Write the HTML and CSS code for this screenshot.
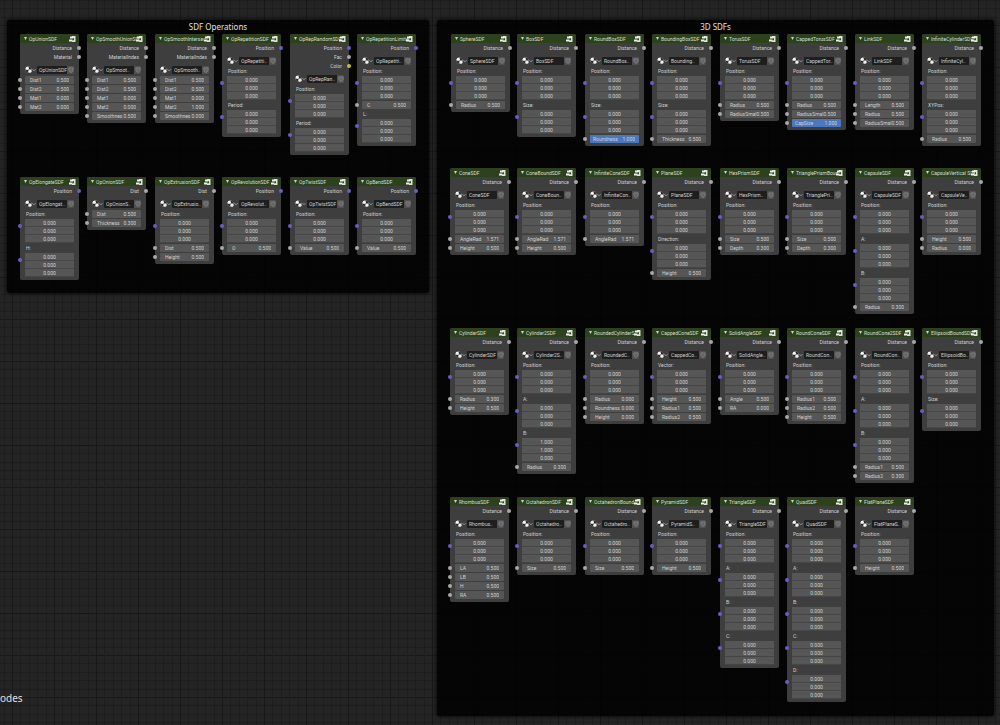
FILE: index.html
```html
<!DOCTYPE html>
<html lang="en">
<head>
    <meta charset="UTF-8">
    <meta name="viewport" content="width=device-width, initial-scale=1.0">
    <title>SDF Nodes</title>
    <link rel="stylesheet" href="styles.css">
</head>

<body>
    <!-- Icons shared by all nodes -->
    <svg class="sprites" aria-hidden="true">
        <symbol id="icon-group" viewBox="0 0 14 12">
            <path d="M6 0h7v12H6V9h3V4H6z" fill="#dfe3dc"/>
            <path d="M2 1h6v4H2zM0 7h7v4H0z" fill="#eef0ec"/>
            <path d="M8 5h2v3H8z" fill="#33491f"/>
        </symbol>
        <symbol id="icon-sphere" viewBox="0 0 14 14">
            <circle cx="7" cy="7" r="6" fill="#d8d8d8"/>
            <path d="M7 1a6 6 0 0 1 6 6H7zM7 7v6a6 6 0 0 1-6-6z" fill="#2c2c2c"/>
            <circle cx="4.500" cy="4.500" r="3" fill="#f4f4f4"/>
            <circle cx="10" cy="10.500" r="3" fill="#efefef"/>
        </symbol>
        <symbol id="icon-shield" viewBox="0 0 14 14">
            <path d="M2 2h10v5c0 3-2 4-5 6-3-2-5-3-5-6z" fill="#666" stroke="#8c8c8c" stroke-width="1.500"/>
        </symbol>
        <symbol id="icon-chevron" viewBox="0 0 8 8">
            <path d="M1 2.500l3 3 3-3" fill="none" stroke="#bbb" stroke-width="1.500"/>
        </symbol>
    </svg>

    <main class="canvas">
        <section class="frame operations" id="operations">
            <h2>SDF Operations</h2>
        </section>
        <section class="frame shapes" id="shapes">
            <h2>3D SDFs</h2>
        </section>
        <p class="caption">odes</p>
    </main>

    <script src="nodes.js"></script>
</body>
</html>
```
FILE: styles.css
```css
* {
    box-sizing: border-box;
}

body {
    margin: 0;
    background-color: #242424;
    color: #d0d0d0;
    font-family: Roboto, "Liberation Sans", sans-serif;
    font-size: 5px;
    line-height: 10px;
}

.sprites {
    display: none;
}

/* Node editor background, four thin lines between two strong ones */
.canvas {
    --thin: transparent 1px 8px, #1e1e1e 8px 9px, transparent 9px 17px, #1e1e1e 17px 18px, transparent 18px 25px, #1e1e1e 25px 26px, transparent 26px 34px, #1e1e1e 34px 35px, transparent 35px;
    position: relative;
    min-height: 100vh;
    overflow: hidden;
    background-image:
        linear-gradient(to right, #181818 1px, var(--thin)),
        linear-gradient(to bottom, #181818 1px, var(--thin));
    background-size: 42px 42px;
    background-position: 12px 25px;
}

.frame {
    position: absolute;
    top: 20px;
    border-radius: 2px;
    background-color: rgba(0, 0, 0, 0.85);
    box-shadow: 0 0 4px #000;
}

.operations {
    left: 7px;
    width: 422px;
    height: 273px;
}

.shapes {
    left: 437px;
    width: 557px;
    height: 696px;
}

.frame h2 {
    margin: 2px 0 0;
    color: #e0e0e0;
    font-family: "Noto Sans", sans-serif;
    font-size: 8px;
    font-weight: normal;
    line-height: 10px;
    text-align: center;
}

.caption {
    position: absolute;
    left: 0;
    bottom: 19px;
    margin: 0;
    color: #e0e0e0;
    font-family: "Noto Sans", sans-serif;
    font-size: 10px;
    line-height: 16px;
}

/* Nodes */
.node {
    position: absolute;
    width: 59px;
    padding-bottom: 3px;
    border-radius: 2px;
    background-color: #3e3e3e;
}

.node header {
    display: flex;
    align-items: center;
    height: 9px;
    padding: 0 3px 0 4px;
    border-radius: 2px 2px 0 0;
    background-color: #2c421c;
}

.node h3 {
    flex: 1;
    min-width: 0;
    margin: 0 0 0 2px;
    color: #d8dcd4;
    font-size: 5px;
    font-weight: normal;
    white-space: nowrap;
}

.arrow {
    flex: none;
    width: 3px;
    height: 3px;
    background-color: #d0d0d0;
    clip-path: polygon(0 0, 100% 0, 50% 100%);
}

.node header svg {
    flex: none;
    width: 7px;
    height: 6px;
}

.output,
.field,
.vector {
    position: relative;
}

.output {
    height: 9px;
    padding-right: 7px;
    text-align: right;
}

.socket {
    position: absolute;
    top: 50%;
    left: -2px;
    width: 4px;
    height: 4px;
    margin-top: -2px;
    border-radius: 50%;
    background-color: #a8a8a8;
}

.output .socket {
    right: -2px;
    left: auto;
}

.socket.blue {
    background-color: #6460c4;
}

.socket.yellow {
    background-color: #c2c62c;
}

.group {
    display: flex;
    align-items: center;
    height: 9px;
    margin: 4px 5px 1px;
}

.group button {
    display: flex;
    flex: none;
    align-items: center;
    padding: 0;
    border: 0;
    background: none;
}

.group .browse {
    width: 12px;
}

.group .browse svg {
    width: 7px;
    height: 7px;
}

.group .browse .small {
    width: 4px;
    height: 4px;
}

.group .fake {
    justify-content: center;
    width: 7px;
    height: 8px;
    border-radius: 0 1px 1px 0;
    background-color: #505050;
}

.group .fake svg {
    width: 6px;
    height: 6px;
}

input {
    min-width: 0;
    padding: 0;
    border: 0;
    background: none;
    color: #d0d0d0;
    font: inherit;
}

.group input {
    flex: 1;
    height: 8px;
    padding-left: 2px;
    border-radius: 1px 0 0 1px;
    background-color: #1e1e1e;
}

.vector {
    padding: 0 5px;
}

.vector span {
    display: block;
    height: 10px;
    padding-left: 1px;
}

.vector input {
    display: block;
    width: 100%;
    height: 8px;
    border-bottom: 1px solid #464646;
    background-color: #565656;
    text-align: center;
}

.field {
    height: 9px;
    padding: 1px 5px 0;
}

.field label {
    display: flex;
    height: 8px;
    padding: 0 5px;
    border-radius: 1px;
    background-color: #565656;
    line-height: 8px;
}

.field label span {
    flex: 1;
    min-width: 0;
    white-space: nowrap;
}

.field input {
    flex: none;
    width: 13px;
    height: 8px;
    text-align: right;
}

.field.slider label {
    padding: 0 4px 0 3px;
    background-color: #4a78c0;
}
```
FILE: nodes.js
```js
// Inputs: "Name:" is a vector, "Name 0.500" a value, a leading * marks a full slider
const operations = [
    { y: 34, nodes: [
        [20, 'OpUnionSDF', 'OpUnionSDF', 'Distance,Material', 'Dist1 0.500,Dist2 0.500,Mat1 0.000,Mat2 0.000'],
        [87, 'OpSmoothUnionSD', 'OpSmoot..', 'Distance,MaterialIndex', 'Dist1 0.500,Dist2 0.500,Mat1 0.000,Mat2 0.000,Smoothnes 0.500'],
        [155, 'OpSmoothIntersec', 'OpSmooth..', 'Distance,MaterialIndex', 'Dist1 0.500,Dist2 0.500,Mat1 0.000,Mat2 1.000,Smoothnes 0.000'],
        [222, 'OpRepetitionSDF', 'OpRepetiti..', 'Position', 'Position:,Period:'],
        [290, 'OpRepRandomSDF', 'OpRepRan..', 'Position,Fac,Color', 'Position:,Period:'],
        [357, 'OpRepetitionLimite', 'OpRepetiti..', 'Position', 'Position:,C 0.500,L:']
    ] },
    { y: 177, nodes: [
        [20, 'OpElongateSDF', 'OpElongat..', 'Position', 'Position:,H:'],
        [87, 'OpOnionSDF', 'OpOnionS..', 'Dist', 'Dist 0.500,Thickness 0.300'],
        [155, 'OpExtrusionSDF', 'OpExtrusio..', 'Dist', 'Position:,Dist 0.500,Height 0.500'],
        [222, 'OpRevolutionSDF', 'OpRevolut..', 'Position', 'Position:,O 0.500'],
        [290, 'OpTwistSDF', 'OpTwistSDF', 'Position', 'Position:,Value 0.500'],
        [357, 'OpBendSDF', 'OpBendSDF', 'Position', 'Position:,Value 0.500']
    ] }
];

const shapes = [
    { y: 34, nodes: [
        [451, 'SphereSDF', 'SphereSDF', 'Distance', 'Position:,Radius 0.500'],
        [517, 'BoxSDF', 'BoxSDF', 'Distance', 'Position:,Size:'],
        [585, 'RoundBoxSDF', 'RoundBox..', 'Distance', 'Position:,Size:,*Roundness 1.000'],
        [652, 'BoundingBoxSDF', 'Bounding..', 'Distance', 'Position:,Size:,Thickness 0.500'],
        [720, 'TorusSDF', 'TorusSDF', 'Distance', 'Position:,Radius 0.500,RadiusSmal 0.500'],
        [787, 'CappedTorusSDF', 'CappedTor..', 'Distance', 'Position:,Radius 0.500,RadiusSmal 0.500,*CapSize 1.000'],
        [855, 'LinkSDF', 'LinkSDF', 'Distance', 'Position:,Length 0.500,Radius 0.500,RadiusSmal 0.500'],
        [922, 'InfiniteCylinderSDF', 'InfiniteCyl..', 'Distance', 'Position:,XYPos:,Radius 0.500']
    ] },
    { y: 168, nodes: [
        [450, 'ConeSDF', 'ConeSDF', 'Distance', 'Position:,AngleRad 1.571,Height 0.500'],
        [517, 'ConeBoundSDF', 'ConeBoun..', 'Distance', 'Position:,AngleRad 1.571,Height 0.500'],
        [585, 'InfiniteConeSDF', 'InfiniteCon..', 'Distance', 'Position:,AngleRad 1.571'],
        [652, 'PlaneSDF', 'PlaneSDF', 'Distance', 'Position:,Direction:,Height 0.500'],
        [720, 'HexPrismSDF', 'HexPrism..', 'Distance', 'Position:,Size 0.500,Depth 0.300'],
        [787, 'TrianglePrismBoun', 'TrianglePri..', 'Distance', 'Position:,Size 0.500,Depth 0.300'],
        [855, 'CapsuleSDF', 'CapsuleSDF', 'Distance', 'Position:,A:,B:,Radius 0.300'],
        [922, 'CapsuleVertical SDF', 'CapsuleVe..', 'Distance', 'Position:,Height 0.500,Radius 0.000']
    ] },
    { y: 328, nodes: [
        [450, 'CylinderSDF', 'CylinderSDF', 'Distance', 'Position:,Radius 0.300,Height 0.500'],
        [517, 'Cylinder2SDF', 'Cylinder2S..', 'Distance', 'Position:,A:,B:1.000/1.000/0.000,Radius 0.300'],
        [585, 'RoundedCylinderS..', 'RoundedC..', 'Distance', 'Position:,Radius 0.000,Roundness 0.000,Height 0.000'],
        [652, 'CappedConeSDF', 'CappedCo..', 'Distance', 'Vector:,Height 0.500,Radius1 0.500,Radius2 0.500'],
        [720, 'SolidAngleSDF', 'SolidAngle..', 'Distance', 'Position:,Angle 0.500,RA 0.000'],
        [787, 'RoundConeSDF', 'RoundCon..', 'Distance', 'Position:,Radius1 0.500,Radius2 0.500,Height 0.500'],
        [855, 'RoundCone2SDF', 'RoundCon..', 'Distance', 'Position:,A:,B:,Radius1 0.500,Radius2 0.300'],
        [922, 'EllipsoidBoundSDF', 'EllipsoidBo..', 'Distance', 'Position:,Size:']
    ] },
    { y: 497, nodes: [
        [450, 'RhombusSDF', 'Rhombus..', 'Distance', 'Position:,LA 0.500,LB 0.500,H 0.500,RA 0.500'],
        [517, 'OctahedronSDF', 'Octahedro..', 'Distance', 'Position:,Size 0.500'],
        [585, 'OctahedronBound..', 'Octahedro..', 'Distance', 'Position:,Size 0.500'],
        [652, 'PyramidSDF', 'PyramidS..', 'Distance', 'Position:,Height 0.500'],
        [720, 'TriangleSDF', 'TriangleSDF', 'Distance', 'Position:,A:,B:,C:'],
        [787, 'QuadSDF', 'QuadSDF', 'Distance', 'Position:,A:,B:,C:,D:'],
        [855, 'FlatPlaneSDF', 'FlatPlaneS..', 'Distance', 'Position:,Height 0.500']
    ] }
];

const socketColors = { Position: 'blue', Color: 'yellow' };

function outputHtml(name) {
    return `<div class="output">${name}<i class="socket ${socketColors[name] || ''}"></i></div>`;
}

function inputHtml(input) {
    if (input.includes(':')) {
        const [name, values] = input.split(':');
        const numbers = values ? values.split('/') : ['0.000', '0.000', '0.000'];
        const boxes = numbers.map((n, i) => `<input type="text" aria-label="${name} ${'XYZ'[i]}" value="${n}">`);
        return `<div class="vector"><i class="socket blue"></i><span>${name}:</span>${boxes.join('')}</div>`;
    }

    const slider = input.startsWith('*');
    const [name, value] = input.replace('*', '').split(' ');
    return `<div class="field ${slider ? 'slider' : ''}">
        <i class="socket"></i>
        <label><span>${name}</span><input type="text" value="${value}"></label>
    </div>`;
}

function addNodes(frameId, rows) {
    const frame = document.getElementById(frameId);

    for (const row of rows) {
        for (const [x, title, group, outputs, inputs] of row.nodes) {
            const node = document.createElement('article');
            node.className = 'node';
            // Positions are canvas coordinates
            node.style.left = x - frame.offsetLeft + 'px';
            node.style.top = row.y - frame.offsetTop + 'px';
            node.innerHTML = `
                <header><i class="arrow"></i><h3>${title}</h3><svg><use href="#icon-group"/></svg></header>
                ${outputs.split(',').map(outputHtml).join('')}
                <div class="group">
                    <button class="browse" aria-label="Browse groups"><svg><use href="#icon-sphere"/></svg><svg class="small"><use href="#icon-chevron"/></svg></button>
                    <input type="text" aria-label="Group name" value="${group}">
                    <button class="fake" aria-label="Fake user"><svg><use href="#icon-shield"/></svg></button>
                </div>
                ${inputs.split(',').map(inputHtml).join('')}`;
            frame.appendChild(node);
        }
    }
}

addNodes('operations', operations);
addNodes('shapes', shapes);
```
